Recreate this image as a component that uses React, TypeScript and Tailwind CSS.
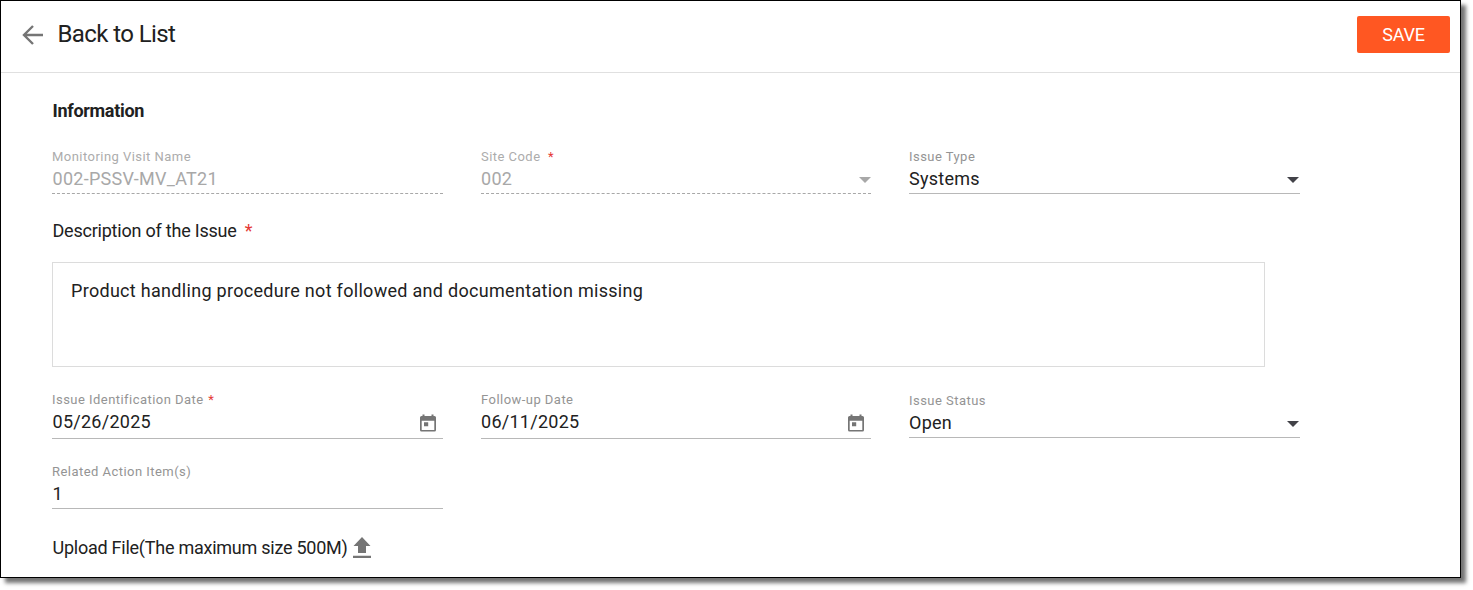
import type { ReactNode } from "react";

type FieldProps = {
  label: string;
  value: string;
  required?: boolean;
  disabled?: boolean;
  className?: string;
  valueClassName?: string;
  icon?: ReactNode;
  gap?: boolean;
};

function Field({ label, value, required, disabled, className = "", valueClassName = "", icon, gap }: FieldProps) {
  return (
    <div className={`flex flex-col border-b ${disabled ? "border-dashed border-[#a8a8a8]" : "border-[#b8b8b8]"} ${className}`}>
      <div className={`h-[14px] text-[13px] leading-[14px] tracking-[0.46px] ${disabled ? "text-[#acacac]" : "text-[#949494]"}`}>
        {label}
        {required && <span className={`text-[#e53935] ${gap ? "ml-[7.5px]" : "ml-[4.5px]"}`}>*</span>}
      </div>
      <div className="mt-[5px] flex h-[20px] items-center justify-between">
        <span className={`text-[18px] leading-[20px] tracking-[0.27px] ${disabled ? "text-[#a8a8a8]" : "text-[#212121]"} ${valueClassName}`}>{value}</span>
        {icon}
      </div>
    </div>
  );
}

function Caret({ className = "" }: { className?: string }) {
  return (
    <svg className={`mt-[2px] ${className}`} width="12" height="6" viewBox="0 0 12 6" fill="currentColor">
      <path d="M0 0h12L6 6z" />
    </svg>
  );
}

function Calendar() {
  return (
    <svg className="mr-[7px] mt-[2px] text-[#757575]" width="16" height="18" viewBox="0 0 16 18" fill="currentColor">
      <path fillRule="evenodd" d="M2.5 0.500h2V2h7V0.500h2V2h1A1.500 1.500 0 0 1 16 3.500V16a1.500 1.500 0 0 1-1.500 1.500h-13A1.500 1.500 0 0 1 0 16V3.500A1.500 1.500 0 0 1 1.500 2h1zM1.700 6.800V16h12.600V6.800zM4 8.300h4.200v4H4z" />
    </svg>
  );
}

export default function App() {
  return (
    <div className="h-[590px] w-[1473px] overflow-hidden bg-white font-[Roboto,sans-serif] text-[#212121]">
      <main className="h-[578px] w-[1461px] border border-black bg-white shadow-[5px_5px_4px_rgba(0,0,0,0.55)]">
        <header className="flex h-[72px] items-start justify-between border-b border-[#e0e0e0] pl-[20px] pr-[10px]">
          <div className="flex items-center pt-[19px]">
            <svg width="24" height="28" viewBox="0 0 24 28" fill="none" stroke="#757575" strokeWidth="2.4">
              <path d="M22 15H3.5M12 6L3 15l9 9" />
            </svg>
            <h1 className="ml-[12.5px] text-[24px] leading-[28px] tracking-[-0.6px]">Back to List</h1>
          </div>
          <button className="mt-[15px] h-[37px] w-[93px] rounded-[2px] bg-[#ff5722] text-[18px] tracking-[-0.2px] text-white">SAVE</button>
        </header>
        <section className="pl-[51px]">
          <h2 className="pl-[0.5px] pt-[28px] text-[18px] font-bold leading-[20px] tracking-[-0.3px]">Information</h2>
          <div className="mt-[29px] grid grid-cols-[391px_390px_391px] gap-x-[38px]">
            <Field className="h-[44px]" valueClassName="pl-[0.5px]" label="Monitoring Visit Name" value="002-PSSV-MV_AT21" disabled />
            <Field className="h-[44px]" label="Site Code" value="002" required gap disabled icon={<Caret className="text-[#a8a8a8]" />} />
            <Field className="h-[44px]" label="Issue Type" value="Systems" icon={<Caret className="mr-px text-[#424248]" />} />
          </div>
          <div className="mt-[27px] pl-[0.5px] text-[18px] leading-[20px] tracking-[-0.22px]">Description of the Issue <span className="ml-1 text-[#e53935]">*</span></div>
          <div className="mt-[21px] h-[105px] w-[1213px] border border-[#dcdcdc] px-[18px] pt-[18px] text-[18px] leading-[20px] tracking-[0.3px]">
            Product handling procedure not followed and documentation missing
          </div>
          <div className="mt-[26px] grid grid-cols-[391px_390px_391px] gap-x-[38px]">
            <Field className="h-[46px]" valueClassName="pl-[0.5px]" label="Issue Identification Date" value="05/26/2025" required icon={<Calendar />} />
            <Field className="h-[46px]" label="Follow-up Date" value="06/11/2025" icon={<Calendar />} />
            <Field className="mt-px h-[44px]" label="Issue Status" value="Open" icon={<Caret className="mr-px text-[#424248]" />} />
          </div>
          <Field className="mt-[26px] h-[44px] w-[391px]" valueClassName="pl-[0.5px]" label="Related Action Item(s)" value="1" />
          <div className="mt-[28px] flex items-center pl-[0.5px] text-[18px] leading-[20px] tracking-[-0.25px]">
            Upload File(The maximum size 500M)
            <svg className="ml-[4px]" width="20" height="22" viewBox="0 0 20 22" fill="#757575">
              <path d="M6 16h8V9h4.500L10 0 1.500 9H6zM1 18.800h18V21H1z" />
            </svg>
          </div>
        </section>
      </main>
    </div>
  );
}
